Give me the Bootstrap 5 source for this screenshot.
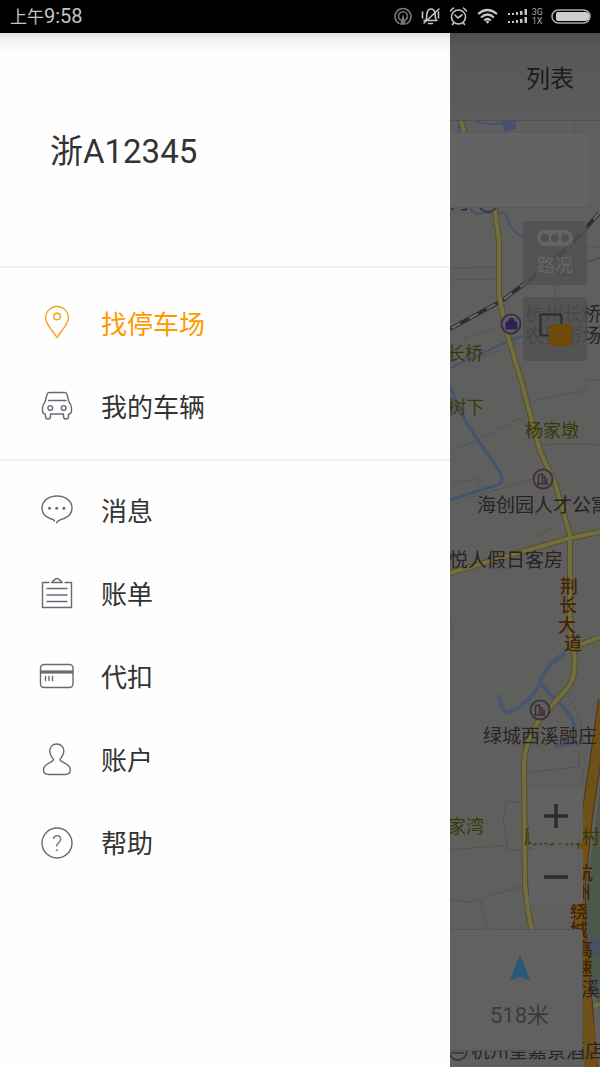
<!DOCTYPE html>
<html lang="zh-CN">
<head>
<meta charset="utf-8">
<meta name="viewport" content="width=device-width, initial-scale=1">
<title>停车</title>
<link href="https://cdn.jsdelivr.net/npm/bootstrap@5.3.0/dist/css/bootstrap.min.css" rel="stylesheet">
<style>
  body { font-family: Roboto, "Noto Sans CJK SC", sans-serif; color: #333; background: #fff; }
  .status-bar { height: 33px; background: #000; color: #c4c4c4; font-size: 17px; line-height: 33px; padding: 0 8px 0 10px; }
  .status-time { font-size: 20px; }
  .net-type { font-size: 9px; line-height: 9px; color: #aaa; }
  .drawer { background: linear-gradient(#e2e2e2, #f4f4f4 8px, #fefefe 22px); }
  .plate { height: 235px; padding: 4px 0 0 50px; font-size: 33px; border-bottom: 2px solid #f0f0f0; }
  .menu-main { padding: 13px 0 12px; border-bottom: 2px solid #f0f0f0; }
  .menu-more { padding: 7px 0; }
  .menu-link { height: 83px; padding-left: 37px; gap: 24px; font-size: 26px; color: #333; text-decoration: none; }
  .menu-link span { padding-top: 5px; }
  .menu-link.active { color: #f90; }
  .menu-link svg { width: 40px; height: 40px; fill: none; stroke: #6b6874; stroke-width: 1.4; stroke-linecap: round; stroke-linejoin: round; flex: none; }
  .menu-link.active svg { stroke: #f5a01c; }
  .map-pane { background: #5f5f5e; min-width: 0; }
  .map-canvas { z-index: 0; font-size: 19px; }
  .map-ui { z-index: 1; }
  .map-bar { height: 88px; padding: 4px 22px 0 0; background: linear-gradient(#4d4d4d, #585858 12px, #5c5c5c); border-bottom: 1px solid #505050; }
  .plain-btn { border: 0; padding: 0; background: none; color: #1c1c1c; }
  .map-bar .plain-btn { font-size: 24px; padding: 0 4px; }
  .search-box { height: 76px; margin: 11px 10px 13px 0; background: #636363; border: 1px solid #5a5a5a; border-left: 0; border-radius: 0 4px 4px 0; }
  .layer-btn { width: 64px; height: 64px; margin: 0 13px 12px 0; border: 0; border-radius: 3px; padding: 0; background: rgba(80,80,80,.8); color: #666; font-size: 18px; line-height: 22px; }
  .zoom-btn { width: 54px; height: 55px; margin: 0 17px 6px 0; border: 0; border-radius: 3px; padding: 0; background: rgba(98,98,98,.96); }
  .distance { height: 122px; margin: 19px 17px 16px 0; background: #616161; border: 1px solid #555; border-left: 0; border-radius: 0 4px 4px 0; color: #3a3a3a; font-size: 22px; line-height: 28px; padding: 24px 0 0 7px; }
</style>
</head>
<body class="d-flex flex-column min-vh-100">
<header class="status-bar d-flex align-items-center justify-content-between">
  <div>上午<span class="status-time">9:58</span></div>
  <div class="d-flex align-items-center">
    <svg width="112" height="24" viewBox="391 5 112 24" fill="none" stroke="#c4c4c4" stroke-width="1.6" stroke-linecap="round" aria-hidden="true">
      <g stroke="#777"><path d="M398 23.500A8 8 0 1 1 406 23.500M399.500 20A4.500 4.500 0 1 1 404.500 20"/><path d="M402 17l-2 7h4z" fill="#777"/></g>
      <path d="M423 20.500h13M425 20c1-2 .5-5 1-7q1-4 4-4t4 4c.5 2 0 5 1 7M427.500 23.500h4M438 9l-15 14M421.500 12v6M437.500 12v6" />
      <circle cx="457.500" cy="17" r="7"/><path d="M454 15l3 3 4-3M449.500 11l3-3M465.500 11l-3-3M452.500 23l-1 1.500M462.500 23l1 1.500"/>
      <g stroke-width="2.200" stroke-linecap="butt"><path d="M477 14q9.500-8 19 0M480 17.500q6.500-6 13 0M483.200 20.500q3.300-3 6.600 0"/><circle cx="486.500" cy="22" r="1" fill="#c4c4c4" stroke-width="1"/></g>
    </svg>
    <svg class="ms-1 me-1" width="20" height="18" viewBox="507 8 20 18" fill="#c4c4c4" aria-hidden="true">
      <path d="M507 13h2v2h-2zM511 13h2v2h-2zM515 12h2v3h-2zM519 11h2.500v4H519zM523.500 9h2.500v6h-2.500zM507 21h2v2h-2zM511 21h2v2h-2zM515 20h2v3h-2zM519 19h2.500v4H519zM523.500 17h2.500v6h-2.500z"/>
    </svg>
    <div class="net-type me-2"><div>3G</div><div>1X</div></div>
    <svg width="41" height="16" viewBox="0 0 41 16" aria-hidden="true"><rect x="1" y="1" width="38" height="13" rx="6.500" fill="none" stroke="#aaa" stroke-width="1.500"/><path d="M7 3H34a4.500 4.500 0 0 1 0 9H7Q5 12 5 10V5Q5 3 7 3z" fill="#ccc"/></svg>
  </div>
</header>

<main class="flex-grow-1 d-flex">
  <aside class="drawer w-75 flex-shrink-0">
    <div class="plate d-flex align-items-center">浙A12345</div>
    <nav aria-label="菜单">
      <div class="menu-main">
        <a href="#" class="menu-link active d-flex align-items-center"><svg viewBox="0 0 40 40"><path d="M20 34.500C16 28 8.500 21 8.500 15A11.400 11.400 0 0 1 31.500 15C31.500 21 24 28 20 34.500z"/><circle cx="20" cy="13.500" r="3.300"/></svg><span>找停车场</span></a>
        <a href="#" class="menu-link d-flex align-items-center"><svg viewBox="0 0 40 40"><path d="M12.500 6.500H27.500Q29.500 6.500 30 8.500L32 16Q34.500 18.500 34.500 22V25Q34.500 28 31.500 28.300V30.500Q31.500 33 29 33T26.500 30.500V28H13.500V30.500Q13.500 33 11 33T8.500 30.500V28.300Q5.500 28 5.500 25V22Q5.500 18.500 8 16L10 8.500Q10.500 6.500 12.500 6.500zM11.500 14.500H29"/><circle cx="13.300" cy="22" r="2.400"/><circle cx="26.700" cy="22" r="2.400"/></svg><span>我的车辆</span></a>
      </div>
      <div class="menu-more">
        <a href="#" class="menu-link d-flex align-items-center"><svg viewBox="0 0 40 40"><path d="M17.500 31Q17 29.500 13 28.500C8 26.500 5 22.500 5 18C5 11 11.500 6 20 6S35 11 35 18C35 22.500 32 26.500 27 28.500Q21 30 19.500 32.800"/><g fill="#6b6874" stroke="none"><circle cx="12.500" cy="18.300" r="1.500"/><circle cx="19.700" cy="18.300" r="1.500"/><circle cx="26.900" cy="18.300" r="1.500"/></g></svg><span>消息</span></a>
        <a href="#" class="menu-link d-flex align-items-center"><svg viewBox="0 0 40 40"><path d="M12 9.500H5.500V34.500H34.500V9.500H28M10 15.500H30M10 22H30M10 28.500H30M14.500 9.500H25.500M15.500 9Q16 7.200 17.500 7.200Q18 5.500 20 5.500T22.500 7.200Q24 7.200 24.500 9"/></svg><span>账单</span></a>
        <a href="#" class="menu-link d-flex align-items-center"><svg viewBox="0 0 40 40"><rect x="3.500" y="8.500" width="32.500" height="23" rx="3.500"/><path d="M4 16H36" stroke-width="3.200" stroke-linecap="butt"/><path d="M8.500 20.500V24.500M12 20.500V24.500M15.500 20.500V24.500"/></svg><span>代扣</span></a>
        <a href="#" class="menu-link d-flex align-items-center"><svg viewBox="0 0 40 40"><path d="M16.500 20.500C15 18.500 12.800 15 12.800 12C12.800 8 15.500 5 19.700 5S26.800 8 26.800 12C26.800 15 24.500 18.500 23 20.500C23 24 33.300 23.500 33.300 31Q33.300 35.500 28 35.500H12Q6.500 35.500 6.500 31C6.500 23.500 16.500 24 16.500 20.500z"/></svg><span>账户</span></a>
        <a href="#" class="menu-link d-flex align-items-center"><svg viewBox="0 0 40 40"><circle cx="20" cy="21" r="15"/><text x="20" y="29" text-anchor="middle" font-size="22" font-weight="300" fill="#6b6874" stroke="none">?</text></svg><span>帮助</span></a>
      </div>
    </nav>
  </aside>

  <section class="map-pane flex-grow-1 position-relative overflow-hidden" aria-label="地图">
    <svg class="map-canvas position-absolute top-0 start-0 w-100 h-100" viewBox="450 33 150 1034" preserveAspectRatio="xMinYMin slice">
      <!-- parks and water -->
      <path d="M600 785L592 850L584 900V960L600 1010z" fill="#4d574b"/>
      <path d="M587 937l6 4 7-2v14l-8 4-5-5z" fill="#445263"/>
      <path d="M502 118h14v11l-12 3z" fill="#46536d"/>
      <g fill="none" stroke="#435370" stroke-width="2">
        <path d="M457 135l4-16M475 121q18 6 32 1M470 208l5 6q16-3 31-1l4 13q6 8 14 12l18 14 20 24q12-2 22-13l16-5"/>
        <path d="M450 368L500 345L545 327L600 327"/>
        <path d="M450 385Q458 411 473 433T500 472Q506 484 494 486L450 500" stroke-width="3"/>
        <path d="M565 653Q547 663 540 683Q530 704 508 713Q500 710 499 695M540 683L555 699Q574 715 575 731M555 747L573 742" stroke-width="4" stroke="#48566e"/>
      </g>
      <!-- minor roads and parcels -->
      <g fill="none" stroke="#555452" stroke-width="1">
        <path d="M575 124v9M450 268l45-1M450 280l46-1M464 338l44-13 8 20-46 15zM600 247h-20q-12 20-25 40v18M534 401l40-9h12v-12h14M450 452q36-15 70-34l20 28q20-4 60-1M452 483l24-4 4 8M468 498l70-20M538 535l14-6M450 635l3 2-2-18M565 693q18 20 18 50M528 772l51-5v-17M579 767l5 3-4 20M525 803l-19-2-3 20 5 30 24-3M450 850l58-5M450 900l22 2 50-16M480 900l8 30"/>
      </g>
      <!-- railway -->
      <path d="M600 212L570 246L537 274L503 300L450 329" fill="none" stroke="#2e2e2e" stroke-width="4"/>
      <path d="M600 212L570 246L537 274L503 300L450 329" fill="none" stroke="#6a6a6a" stroke-width="2" stroke-dasharray="10 10"/>
      <!-- main roads -->
      <g fill="none" stroke="#57502a" stroke-width="6"><path d="M460 118L470 150L494 205L499 240V295L506 330L521 380L540 451L555 483L570 535V620Q570 640 574 653Q578 680 563 693L537 723Q524 745 524 765L525 883Q527 910 533 935"/><path d="M450 573L507 556L570 538L600 532M574 647L600 637"/></g>
      <g fill="none" stroke="#716e40" stroke-width="4"><path d="M460 118L470 150L494 205L499 240V295L506 330L521 380L540 451L555 483L570 535V620Q570 640 574 653Q578 680 563 693L537 723Q524 745 524 765L525 883Q527 910 533 935"/><path d="M450 573L507 556L570 538L600 532M574 647L600 637M588 1008L600 1004"/></g>
      <path d="M604 700L597 750L587 817L580 883V930L584 970L592 1067" fill="none" stroke="#4d3510" stroke-width="12"/>
      <path d="M604 700L597 750L587 817L580 883V930L584 970L592 1067" fill="none" stroke="#6f5018" stroke-width="10"/>
      <path d="M582 995Q597 1010 597 1067H584z" fill="#6f5018"/>
      <!-- place markers -->
      <g fill="#625f60" stroke="#3d3436" stroke-width="2"><circle cx="488" cy="203" r="9"/><circle cx="511" cy="324" r="9.500" stroke="#382f48"/><circle cx="543" cy="479" r="9.500"/><circle cx="540" cy="710" r="9.500"/><circle cx="458" cy="1051" r="9"/></g>
      <path d="M506 322h11v7h-11zM508.500 322q0-4 3-4t3 4" fill="#2f2057" stroke="#2f2057"/>
      <g fill="none" stroke="#402b30" stroke-width="1.500"><path d="M538.500 484V475l4-1v10M542 477h3v7M537 484h11M547 484v-5M452 1053h12"/><path d="M535.500 715V706l4-1v10M539 708h3v7M534 715h11M544 715v-5"/></g>
      <!-- place names -->
      <g fill="#272425">
        <text x="450" y="209">河</text><text x="525" y="321">杭州长桥</text><text x="525" y="343">农贸市场</text>
        <text x="477" y="512">海创园人才公寓</text><text x="449" y="567">悦人假日客房</text><text x="483" y="743">绿城西溪融庄</text>
        <text x="581" y="996">溪玥</text><text x="471" y="1058">杭州皇嘉景酒店</text>
      </g>
      <g fill="#353b08" font-size="18"><text x="447" y="360">长桥</text><text x="448" y="414">树下</text><text x="525" y="437">杨家墩</text><text x="448" y="833">家湾</text><text x="524" y="844" font-size="19">顾家新村</text></g>
      <g fill="#452404" font-size="18" font-weight="500" text-anchor="middle"><text x="569" y="593">荆</text><text x="568" y="612">长</text><text x="567" y="632">大</text><text x="573" y="650">道</text><text x="584" y="880">杭</text><text x="582" y="899">州</text><text x="579" y="918">绕</text><text x="579" y="937">城</text><text x="584" y="956">高</text><text x="584" y="975">速</text></g>
    </svg>

    <div class="map-ui position-relative d-flex flex-column h-100">
      <div class="map-bar d-flex align-items-center justify-content-end"><button type="button" class="plain-btn">列表</button></div>
      <div class="search-box"></div>
      <button type="button" class="layer-btn align-self-end d-flex flex-column align-items-center justify-content-center">
        <svg class="mb-2" width="38" height="18" viewBox="0 0 38 18" aria-hidden="true"><rect x="1" y="1" width="36" height="16" rx="8" fill="#646464"/><g fill="#505050"><circle cx="9" cy="9" r="4"/><circle cx="19" cy="9" r="4"/><circle cx="29" cy="9" r="4"/></g></svg>路况
      </button>
      <button type="button" class="layer-btn align-self-end" aria-label="图层">
        <svg width="64" height="64" viewBox="0 0 64 64" aria-hidden="true"><rect x="17.500" y="17.500" width="21" height="21" rx="2" fill="none" stroke="#2c2c2c" stroke-width="2"/><rect x="26" y="27" width="23" height="22" rx="3" fill="#6e4b0a"/></svg>
      </button>
      <button type="button" class="zoom-btn align-self-end mt-auto" aria-label="放大"><svg width="24" height="24" viewBox="0 0 24 24" stroke="#2b2b2b" stroke-width="3.500"><path d="M0 12H24M12 0V24"/></svg></button>
      <button type="button" class="zoom-btn align-self-end" aria-label="缩小"><svg width="24" height="24" viewBox="0 0 24 24" stroke="#2b2b2b" stroke-width="3.500"><path d="M0 12H24"/></svg></button>
      <div class="distance d-flex flex-column align-items-center">
        <svg class="mb-3" width="22" height="28" viewBox="0 0 22 28" aria-hidden="true"><path d="M11 1L21.500 27L11 22.500L.5 27z" fill="#28577c"/></svg>
        <span class="pt-1">518米</span>
      </div>
    </div>
  </section>
</main>
<script src="https://cdn.jsdelivr.net/npm/bootstrap@5.3.0/dist/js/bootstrap.bundle.min.js"></script>
</body>
</html>
